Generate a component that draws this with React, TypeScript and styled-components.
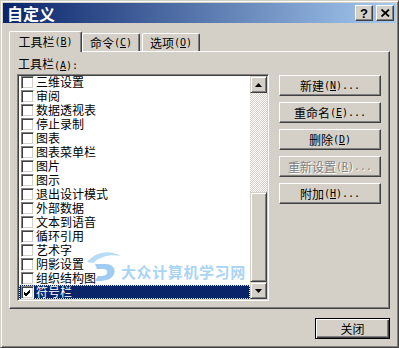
import React from "react";
import styled, { createGlobalStyle, css } from "styled-components";

const face = "#d4d0c8";
const shadow = "#808080";
const dark = "#404040";
const navy = "#0a246a";

const GlobalStyle = createGlobalStyle`
  html, body { margin: 0; padding: 0; background: ${face}; }
  body {
    font-family: "Noto Sans CJK SC", "Liberation Sans", sans-serif;
    font-size: 12px;
    color: #000;
  }
  #root { width: 399px; height: 348px; }
`;

const Window = styled.div`
  position: relative;
  width: 399px;
  height: 348px;
  box-sizing: border-box;
  background: ${face};
  border: 1px solid;
  border-color: ${face} ${dark} ${dark} ${face};
  box-shadow: inset 1px 1px #fff, inset -1px -1px ${shadow};
  padding: 2px;
  display: flex;
  flex-direction: column;
  overflow: hidden;
`;

const TitleBar = styled.div`
  height: 20px;
  flex: none;
  display: flex;
  align-items: center;
  padding: 0 2px 0 4px;
  background: linear-gradient(to right, ${navy}, #a6caf0);
`;

const Title = styled.div`
  flex: 1;
  color: #fff;
  font-weight: bold;
  font-size: 16px;
  line-height: 20px;
`;

const CaptionButton = styled.div<{ $gap?: boolean }>`
  width: 18px;
  height: 16px;
  box-sizing: border-box;
  margin-left: ${(p) => (p.$gap ? 3 : 0)}px;
  background: ${face};
  border: 1px solid;
  border-color: #fff ${dark} ${dark} #fff;
  box-shadow: inset -1px -1px ${shadow};
  display: flex;
  align-items: center;
  justify-content: center;
  font-family: "Liberation Sans", sans-serif;
  font-weight: bold;
  font-size: 13px;
  line-height: 13px;
`;

const Body = styled.div`
  flex: 1;
  display: flex;
  flex-direction: column;
  padding: 8px 6px 6px 6px;
`;

const TabStrip = styled.div`
  height: 20px;
  display: flex;
  align-items: flex-end;
  position: relative;
  z-index: 1;
`;

const Tab = styled.div<{ $active?: boolean; $w: number; $ml?: number }>`
  box-sizing: border-box;
  width: ${(p) => p.$w}px;
  margin-left: ${(p) => p.$ml ?? 0}px;
  height: ${(p) => (p.$active ? 21 : 18)}px;
  margin-bottom: ${(p) => (p.$active ? -1 : 0)}px;
  background: ${face};
  border-top: 1px solid #fff;
  border-left: 1px solid #fff;
  border-right: 1px solid ${dark};
  box-shadow: inset -1px 0 ${shadow};
  border-radius: 2px 2px 0 0;
  display: flex;
  align-items: center;
  justify-content: center;
  white-space: nowrap;
  line-height: 14px;
  ${(p) =>
    p.$active &&
    css`
      padding-bottom: 1px;
    `}
`;

const Panel = styled.div`
  height: 258px;
  box-sizing: border-box;
  border: 1px solid;
  border-color: #fff ${dark} ${dark} #fff;
  box-shadow: inset -1px -1px ${shadow};
  padding: 4px 0 0 7px;
  display: flex;
  flex-direction: column;
`;

const FieldLabel = styled.div`
  height: 16px;
  line-height: 16px;
  margin-bottom: 2px;
  padding-left: 1px;
`;

const ContentRow = styled.div`
  display: flex;
  gap: 10px;
`;

const ListBox = styled.div`
  width: 252px;
  height: 227px;
  box-sizing: border-box;
  border: 1px solid;
  border-color: ${shadow} #fff #fff ${shadow};
  box-shadow: inset 1px 1px ${dark}, inset -1px -1px ${face};
  padding: 1px;
  display: flex;
  background: #fff;
`;

const Items = styled.div`
  flex: 1;
  overflow: hidden;
  position: relative;
`;

const ItemsInner = styled.div`
  margin-top: -1px;
`;

const Item = styled.div<{ $selected?: boolean }>`
  height: 14px;
  display: flex;
  align-items: center;
  padding-left: 2px;
  white-space: nowrap;
  line-height: 14px;
  ${(p) =>
    p.$selected &&
    css`
      background: ${navy};
      color: #fff;
      outline: 1px dotted #e8e4dc;
      outline-offset: -1px;
    `}
`;

const Check = styled.span`
  width: 13px;
  height: 13px;
  box-sizing: border-box;
  flex: none;
  border: 1px solid;
  border-color: ${shadow} #fff #fff ${shadow};
  box-shadow: inset 1px 1px ${dark}, inset -1px -1px ${face};
  background: #fff;
  margin-right: 2px;
  display: flex;
  align-items: center;
  justify-content: center;
`;

const ScrollBar = styled.div`
  width: 17px;
  flex: none;
  display: flex;
  flex-direction: column;
`;

const ScrollButton = styled.div`
  width: 17px;
  height: 17px;
  box-sizing: border-box;
  flex: none;
  background: ${face};
  border: 1px solid;
  border-color: ${face} ${dark} ${dark} ${face};
  box-shadow: inset 1px 1px #fff, inset -1px -1px ${shadow};
  display: flex;
  align-items: center;
  justify-content: center;
`;

const Track = styled.div`
  flex: 1;
  display: flex;
  flex-direction: column;
  justify-content: flex-end;
  background: repeating-conic-gradient(#fff 0 25%, ${face} 0 50%) 0 0 / 2px 2px;
`;

const Thumb = styled.div`
  height: 90px;
  box-sizing: border-box;
  background: ${face};
  border: 1px solid;
  border-color: ${face} ${dark} ${dark} ${face};
  box-shadow: inset 1px 1px #fff, inset -1px -1px ${shadow};
`;

const ButtonColumn = styled.div`
  display: flex;
  flex-direction: column;
  gap: 6px;
  padding-top: 1px;
`;

const Button = styled.div<{ $disabled?: boolean; $default?: boolean; $w?: number }>`
  width: ${(p) => p.$w ?? 102}px;
  height: 21px;
  box-sizing: border-box;
  background: ${face};
  border: 1px solid;
  border-color: #fff ${dark} ${dark} #fff;
  box-shadow: inset -1px -1px ${shadow};
  display: flex;
  align-items: center;
  justify-content: center;
  white-space: nowrap;
  line-height: 14px;
  ${(p) =>
    p.$default &&
    css`
      border-color: #000;
      box-shadow: inset 1px 1px #fff, inset -1px -1px ${dark}, inset -2px -2px ${shadow};
    `}
  ${(p) =>
    p.$disabled &&
    css`
      color: ${shadow};
      text-shadow: 1px 1px #fff;
    `}
`;

const Footer = styled.div`
  display: flex;
  justify-content: flex-end;
  padding-top: 9px;
`;

const Latin = styled.span`
  font-family: "DejaVu Sans Mono", "Liberation Mono", monospace;
  font-size: 10px;
`;

const Watermark = styled.div`
  position: absolute;
  left: 84px;
  top: 249px;
  display: flex;
  align-items: flex-start;
  pointer-events: none;
`;

const WatermarkText = styled.span`
  font-family: "Noto Sans CJK SC", sans-serif;
  font-weight: bold;
  font-size: 15px;
  line-height: 16px;
  letter-spacing: 0.6px;
  color: #a9d4f5;
  margin-top: 14px;
`;

const Key = ({ k }: { k: string }) => (
  <Latin>
    (<u>{k}</u>)
  </Latin>
);

const CheckMark = () => (
  <svg width="9" height="9" viewBox="0 0 9 9">
    <path d="M1 4 L3 6 L7 2 M1 5 L3 7 L7 3 M1 6 L3 8 L7 4" stroke="#000" strokeWidth="1" fill="none" shapeRendering="crispEdges" />
  </svg>
);

const UpArrow = () => (
  <svg width="7" height="4" viewBox="0 0 7 4">
    <path d="M3.5 0 L7 4 L0 4 Z" fill="#000" />
  </svg>
);

const DownArrow = () => (
  <svg width="7" height="4" viewBox="0 0 7 4">
    <path d="M0 0 L7 0 L3.5 4 Z" fill="#000" />
  </svg>
);

const CloseGlyph = () => (
  <svg width="9" height="8" viewBox="0 0 9 8">
    <path d="M0.5 0.5 L8 7.5 M8 0.5 L0.5 7.5" stroke="#000" strokeWidth="1.8" />
  </svg>
);

const Logo = () => (
  <svg width="36" height="32" viewBox="0 0 36 32">
    <path d="M2 12 C10 2 24 -1 36 6 C26 4 16 6 8 13 Z" fill="#b9dcf6" />
    <path d="M10 14 L20 14 C28 14 31 19 29 24 C27 29 21 31 14 31 L10 31 L13 26 L17 26 C21 26 23 23 22 21 C21 19 19 19 16 19 L12 19 Z" fill="#9fcdf2" />
  </svg>
);

const items = [
  "三维设置",
  "审阅",
  "数据透视表",
  "停止录制",
  "图表",
  "图表菜单栏",
  "图片",
  "图示",
  "退出设计模式",
  "外部数据",
  "文本到语音",
  "循环引用",
  "艺术字",
  "阴影设置",
  "组织结构图",
];

export default function App() {
  return (
    <>
      <GlobalStyle />
      <Window>
        <TitleBar>
          <Title>自定义</Title>
          <CaptionButton>?</CaptionButton>
          <CaptionButton $gap>
            <CloseGlyph />
          </CaptionButton>
        </TitleBar>
        <Body>
          <TabStrip>
            <Tab $active $w={73}>
              工具栏<Key k="B" />
            </Tab>
            <Tab $w={58}>
              命令<Key k="C" />
            </Tab>
            <Tab $w={58} $ml={2}>
              选项<Key k="O" />
            </Tab>
          </TabStrip>
          <Panel>
            <FieldLabel>
              工具栏<Key k="A" />
              <Latin>:</Latin>
            </FieldLabel>
            <ContentRow>
              <ListBox>
                <Items>
                  <ItemsInner>
                    {items.map((t) => (
                      <Item key={t}>
                        <Check />
                        {t}
                      </Item>
                    ))}
                    <Item $selected>
                      <Check>
                        <CheckMark />
                      </Check>
                      符号栏
                    </Item>
                  </ItemsInner>
                </Items>
                <ScrollBar>
                  <ScrollButton>
                    <UpArrow />
                  </ScrollButton>
                  <Track>
                    <Thumb />
                  </Track>
                  <ScrollButton>
                    <DownArrow />
                  </ScrollButton>
                </ScrollBar>
              </ListBox>
              <ButtonColumn>
                <Button>
                  新建<Key k="N" />
                  <Latin>...</Latin>
                </Button>
                <Button>
                  重命名<Key k="E" />
                  <Latin>...</Latin>
                </Button>
                <Button>
                  删除<Key k="D" />
                </Button>
                <Button $disabled>
                  重新设置<Key k="R" />
                  <Latin>...</Latin>
                </Button>
                <Button>
                  附加<Key k="H" />
                  <Latin>...</Latin>
                </Button>
              </ButtonColumn>
            </ContentRow>
          </Panel>
          <Footer>
            <Button $default $w={75}>
              关闭
            </Button>
          </Footer>
        </Body>
        <Watermark>
          <Logo />
          <WatermarkText>大众计算机学习网</WatermarkText>
        </Watermark>
      </Window>
    </>
  );
}
